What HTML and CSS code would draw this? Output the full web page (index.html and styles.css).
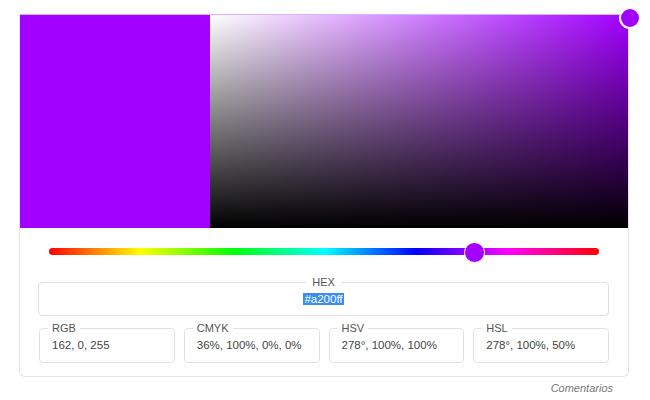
FILE: index.html
```html
<!DOCTYPE html>
<html>
<head>
    <meta charset="utf-8">
    <meta name="viewport" content="width=device-width, initial-scale=1.0">
    <link rel="stylesheet" href="styles.css">
</head>
<body>

<div class="picker">
    <div class="color-area">
        <div class="swatch"></div>
        <div class="sv-box">
            <div class="sv-handle"></div>
        </div>
    </div>

    <div class="hue-track">
        <div class="hue-handle"></div>
    </div>

    <div class="fields">
        <fieldset class="field field-hex">
            <legend>HEX</legend>
            <div class="value"><span class="selected">#a200ff</span></div>
        </fieldset>

        <div class="field-row">
            <fieldset class="field">
                <legend>RGB</legend>
                <div class="value">162, 0, 255</div>
            </fieldset>
            <fieldset class="field">
                <legend>CMYK</legend>
                <div class="value">36%, 100%, 0%, 0%</div>
            </fieldset>
            <fieldset class="field">
                <legend>HSV</legend>
                <div class="value">278°, 100%, 100%</div>
            </fieldset>
            <fieldset class="field">
                <legend>HSL</legend>
                <div class="value">278°, 100%, 50%</div>
            </fieldset>
        </div>
    </div>
</div>

<div class="feedback">Comentarios</div>

</body>
</html>
```

FILE: styles.css
```css
* {box-sizing: border-box;}

body {
    margin: 0;
    padding: 14px 0 0 19px;
    font-family: "Liberation Sans", Arial, sans-serif;
    color: #444;
    background: #fff;
}

.picker {
    width: 610px;
    border: 1px solid #e4e4e4;
    border-top-color: #d9b3ff;
    border-radius: 0 0 6px 6px;
    padding-bottom: 13px;
}

.color-area {
    display: flex;
    height: 213px;
}

.swatch {
    width: 190px;
    background: #a200ff;
}

.sv-box {
    position: relative;
    flex: 1;
    background:
        linear-gradient(to top, #000, rgba(0, 0, 0, 0)),
        linear-gradient(to right, #fff, #a200ff);
}

/* handle sits on the corner, half outside */
.sv-handle {
    position: absolute;
    top: -8px;
    right: -13px;
    width: 22px;
    height: 22px;
    border-radius: 50%;
    background: #a200ff;
    border: 2px solid #fff;
}

.hue-track {
    position: relative;
    height: 7px;
    margin: 20px 29px 0 29px;
    border-radius: 4px;
    background: linear-gradient(to right, #f00, #ff0, #0f0, #0ff, #00f, #f0f, #f00);
}

.hue-handle {
    position: absolute;
    left: 415px;
    top: -6px;
    width: 21px;
    height: 21px;
    border-radius: 50%;
    background: #a200ff;
    border: 1px solid #fff;
}

.fields {
    padding: 21px 19px 0 18px;
}

.field {
    margin: 0;
    padding: 0 8px 10px 8px;
    border: 1px solid #e0e0e0;
    border-radius: 4px;
    min-width: 0;
}

.field legend {
    padding: 0 4px;
    font-size: 11px;
    line-height: 13px;
    color: #555;
}

.field .value {
    padding: 3px 4px 0 4px;
    font-size: 11.5px;
    line-height: 14px;
    white-space: nowrap;
}

.field-hex {
    padding-bottom: 9px;
}

.field-hex legend {
    margin: 0 auto;
    padding: 0 6px;
}

.field-hex .value {
    text-align: center;
}

.selected {
    background: #3a8ef0;
    color: #fff;
    padding: 0 1px;
}

.field-row {
    display: grid;
    grid-template-columns: repeat(4, 1fr);
    gap: 9px;
    margin-top: 6px;
    padding-left: 1px;
}

.feedback {
    width: 610px;
    padding: 5px 16px 0 0;
    text-align: right;
    font-size: 11px;
    font-style: italic;
    color: #777;
}
```
